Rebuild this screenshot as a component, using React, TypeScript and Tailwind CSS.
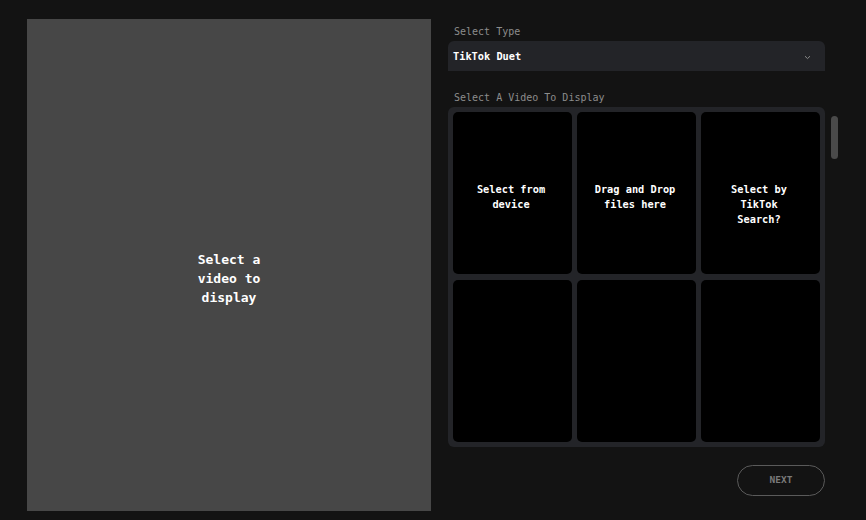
import React from "react";

const mono = "font-['DejaVu_Sans_Mono',monospace]";

function Cell({ text }: { text?: string }) {
  return (
    <div className="h-[162px] rounded-[5px] bg-black pl-[15px] pr-[18px] pt-[70px] text-center text-[10.3px] font-bold leading-[15px] text-white">
      {text}
    </div>
  );
}

export default function App() {
  return (
    <div className={`flex min-h-[520px] w-full gap-[17px] bg-[#131313] pl-[27px] pt-[19px] ${mono}`}>
      {/* preview */}
      <div className="flex h-[492px] w-[404px] items-center justify-center bg-[#474747] pt-[26px]">
        <p className="w-[90px] text-center text-[13px] font-bold leading-[19px] text-white">
          Select a video to display
        </p>
      </div>

      {/* right side */}
      <div className="flex w-[377px] flex-col pt-[6px]">
        <label className="mb-[2px] pl-[6px] text-[10px] leading-[14px] text-[#8c8c8c]">Select Type</label>
        <div className="flex h-[30px] items-center justify-between rounded-t-[6px] bg-[#232428] pl-[5px] pr-[14px] pt-[2px]">
          <span className="text-[10.3px] font-bold text-white">TikTok Duet</span>
          <svg width="7" height="5" viewBox="0 0 7 5" fill="none">
            <path d="M1 1.2 L3.5 3.6 L6 1.2" stroke="#8a8a8a" strokeWidth="1" />
          </svg>
        </div>

        <label className="mb-[2px] mt-[20px] pl-[6px] text-[10px] leading-[14px] text-[#8c8c8c]">
          Select A Video To Display
        </label>
        <div className="flex w-[390px] items-start gap-[6px]">
          <div className="grid w-[377px] shrink-0 grid-cols-3 gap-x-[5px] gap-y-[6px] rounded-[6px] bg-[#232428] p-[5px]">
            <Cell text="Select from device" />
            <Cell text="Drag and Drop files here" />
            <Cell text="Select by TikTok Search?" />
            <Cell />
            <Cell />
            <Cell />
          </div>
          <div className="mt-[9px] h-[43px] w-[7px] rounded-full bg-[#4a4a4a]" />
        </div>

        <div className="mt-[18px] flex justify-end">
          <button className="h-[31px] w-[88px] rounded-full border border-[#5a5a5a] text-[9.5px] font-bold text-[#7a7a7a]">
            NEXT
          </button>
        </div>
      </div>
    </div>
  );
}
